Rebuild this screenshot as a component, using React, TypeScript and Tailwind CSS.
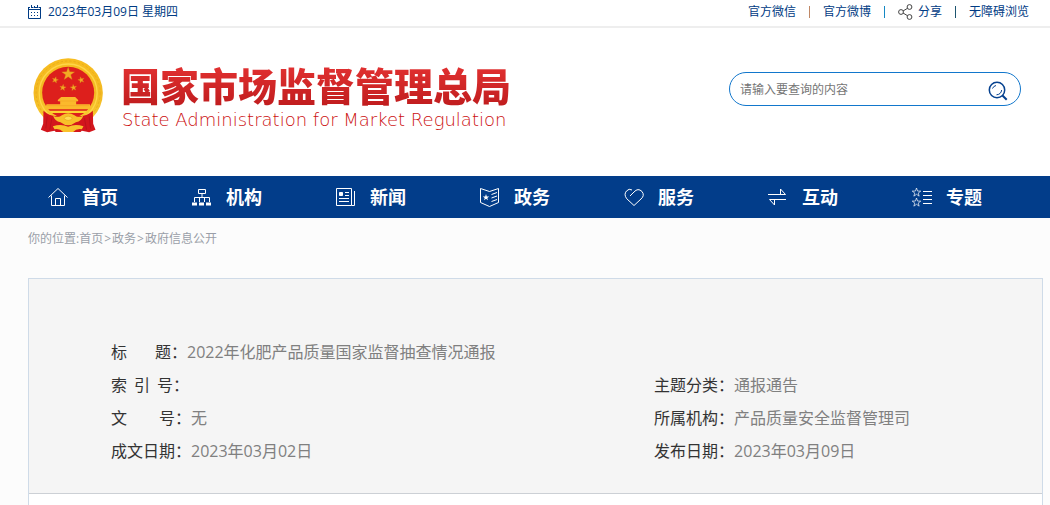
import type { ReactNode } from "react";

const starPoints = (cx: number, cy: number, r: number, turn = 0) =>
  Array.from({ length: 10 }, (_, i) => {
    const radius = i % 2 === 0 ? r : r * 0.4;
    const angle = ((i * 36 - 90 + turn) * Math.PI) / 180;
    return `${(cx + radius * Math.cos(angle)).toFixed(2)},${(cy + radius * Math.sin(angle)).toFixed(2)}`;
  }).join(" ");

function Emblem() {
  return (
    <svg viewBox="38 25 212 225" className="h-[75px] w-[71px] shrink-0" aria-hidden="true">
      <defs>
        <linearGradient id="gold" x1="0" y1="0" x2="0" y2="1">
          <stop offset="0" stopColor="#f8bd20" />
          <stop offset="0.5" stopColor="#f3b922" />
          <stop offset="1" stopColor="#fbcf35" />
        </linearGradient>
      </defs>
      <circle cx="143" cy="130" r="104" fill="url(#gold)" />
      <circle cx="143" cy="130" r="96" fill="none" stroke="#eaae1c" strokeWidth="3" strokeDasharray="7 6" />
      <circle cx="143" cy="130" r="87" fill="none" stroke="#ffd548" strokeWidth="4" />
      <circle cx="143" cy="129" r="78" fill="#dd1f1c" />
      <path
        d="M69 183 Q84 198 110 200 Q143 210 176 200 Q202 198 217 183 L218 222 L225 240 L206 248 L184 243 L180 247 H106 L102 243 L80 248 L61 240 L68 222 Z"
        fill="#d3161d"
      />
      <path
        d="M80 200 L76 236 M94 206 L88 240 M206 200 L210 236 M192 206 L198 240"
        stroke="#b01018"
        strokeWidth="2"
        fill="none"
      />
      <g fill="#f2ab24" stroke="#d98a1c" strokeWidth="1">
        <polygon points={starPoints(143, 73, 20)} />
        <polygon points={starPoints(104, 91, 10, 15)} />
        <polygon points={starPoints(182, 91, 10, -15)} />
        <polygon points={starPoints(127, 114, 10, 8)} />
        <polygon points={starPoints(159, 114, 10, -8)} />
      </g>
      <path d="M122 142 H164 L173 151 V155 H167 V164 H208 L212 179 H74 L78 164 H119 V155 H112 V151 Z" fill="#fbb92c" />
      <path d="M116 154 H170 M80 168 H206" stroke="#ee9c20" strokeWidth="1.5" />
      <path d="M84 183 H202 L193 190 H93 Z" fill="#fcd42f" />
      <path
        d="M98 198 Q114 207 124 197 Q143 184 162 197 Q172 207 188 198 Q184 214 166 218 Q143 236 120 218 Q102 214 98 198 Z"
        fill="#f8c029"
      />
      <path d="M130 206 Q143 193 156 206 Q143 219 130 206 Z" fill="#ffdb55" stroke="#e8a41d" strokeWidth="2" />
      <path d="M97 230 Q122 222 143 231 Q164 222 189 230 L184 239 Q168 236 158 247 H128 Q118 236 102 239 Z" fill="#f9c22b" />
    </svg>
  );
}

function LineIcon({ children }: { children: ReactNode }) {
  return (
    <svg
      width="20"
      height="20"
      viewBox="0 0 20 20"
      fill="none"
      stroke="#fff"
      strokeWidth="1"
      className="shrink-0"
      aria-hidden="true"
    >
      {children}
    </svg>
  );
}

const navItems: { label: string; icon: ReactNode }[] = [
  {
    label: "首页",
    icon: (
      <LineIcon>
        <path d="M0.5 10.5 L10 1.5 L19.5 10.5 M3.5 8.5 V18.5 H16.5 V8.5 M7.5 18 V11.5 H12.5 V18" />
      </LineIcon>
    ),
  },
  {
    label: "机构",
    icon: (
      <LineIcon>
        <path d="M6.5 2.5 H13.5 V6.5 H6.5 Z M10 7 V11 M2.5 15 V10.5 H17.5 V15 M7.5 15 V11 M12.5 15 V11" />
        <path d="M0 17 H5 M7 17 H12 M14 17 H19" strokeWidth="3" />
      </LineIcon>
    ),
  },
  {
    label: "新闻",
    icon: (
      <LineIcon>
        <path d="M0.5 1.5 H15.5 V18.5 H0.5 Z M15.5 18.5 H18.5 V4 M9 5.5 H13 M9 8.5 H13 M3 11.5 H13 M3 14.5 H13" />
        <path d="M3.5 5.5 H6.5 V8.5 H3.5 Z" fill="#fff" />
      </LineIcon>
    ),
  },
  {
    label: "政务",
    icon: (
      <LineIcon>
        <path d="M0.5 1.5 L9.5 4.5 L18.5 1.5 V15.5 L9.5 19.5 L0.5 15.5 Z M11.5 7.5 L17 5.5 M11.5 11 L17 9 M11.5 14.5 L17 12.5" />
        <polygon points={starPoints(6, 10.5, 3.4)} fill="#fff" stroke="none" />
      </LineIcon>
    ),
  },
  {
    label: "服务",
    icon: (
      <LineIcon>
        <path d="M6 9 L10 5 Q14 0.5 18 4.5 Q21 8.5 17 12 L10 18.5 L2.8 11.8 Q-0.5 7.5 2.5 4 Q5 1 8 3" />
      </LineIcon>
    ),
  },
  {
    label: "互动",
    icon: (
      <LineIcon>
        <path d="M0 7.5 H17.5 L12.5 2 V7 M18 12.5 H1.5 L6.5 18 V13" />
      </LineIcon>
    ),
  },
  {
    label: "专题",
    icon: (
      <LineIcon>
        <path d="M11 4.5 H20 M11 8.5 H20 M11 12.5 H20 M11 16.5 H20" />
        <polygon points={starPoints(4.5, 5.5, 4.5)} strokeWidth="0.7" />
        <polygon points={starPoints(4.5, 15.5, 4.5)} strokeWidth="0.7" />
      </LineIcon>
    ),
  },
];

interface FieldProps {
  label: string[];
  labelWidth: string;
  value?: string;
  colon?: string;
  className?: string;
}

function Field({ label, labelWidth, value, colon = "：", className = "" }: FieldProps) {
  return (
    <div className={`flex ${className}`}>
      <dt className="flex shrink-0 text-[#333]">
        <span className={`flex justify-between ${labelWidth}`}>
          {label.map((part) => (
            <span key={part}>{part}</span>
          ))}
        </span>
        {colon}
      </dt>
      <dd className="text-[#808080]">{value}</dd>
    </div>
  );
}

export default function App() {
  return (
    <div className="min-h-screen bg-[#fcfcfc] font-['Open_Sans','Noto_Sans_CJK_SC',sans-serif] text-xs text-[#003b84]">
      <div className="flex h-7 items-center justify-between border-b-2 border-[#eee] bg-white pr-[21px] pb-[2px] pl-7">
        <div className="flex items-center gap-[7px]">
          <svg width="13" height="14" viewBox="0 0 13 14" fill="none" stroke="currentColor" aria-hidden="true">
            <path d="M0.5 2 V13.5 H12.5 V2 M0 4.5 H13" />
            <path d="M0 2.5 H13" strokeDasharray="2 1.5" />
            <path d="M3.5 0 V3 M6.5 1 V3 M9.5 0 V3" />
            <path d="M3 7.5 H11 M3 10.5 H11" strokeDasharray="1 2" />
          </svg>
          <span>2023年03月09日 星期四</span>
        </div>
        <div className="flex items-center gap-[13px]">
          <a href="#wechat">官方微信</a>
          <span className="h-3 w-px bg-[#c08866]" />
          <a href="#weibo">官方微博</a>
          <span className="h-3 w-px bg-[#1488c4]" />
          <a href="#share" className="flex items-center gap-[5px]">
            <svg width="15" height="16" viewBox="0 0 15 16" fill="none" stroke="#444" aria-hidden="true">
              <circle cx="3" cy="8" r="2.4" />
              <circle cx="11.5" cy="3" r="2.4" />
              <circle cx="11.5" cy="13" r="2.4" />
              <path d="M5 7 L9.5 4.3 M5 9 L9.5 11.7" />
            </svg>
            分享
          </a>
          <span className="h-3 w-px bg-[#1d5570]" />
          <a href="#accessible">无障碍浏览</a>
        </div>
      </div>

      <header className="flex h-[148px] items-start justify-between bg-white pr-[29px] pl-[33px]">
        <a href="#home" className="flex items-start gap-[17px] pt-[30px]">
          <Emblem />
          <span className="flex flex-col">
            <span className="bg-linear-to-b from-[#e83434] to-[#bd1a1c] bg-clip-text font-['Noto_Sans_CJK_SC',sans-serif] text-[39px] leading-[52px] font-black whitespace-nowrap text-transparent">
              国家市场监督管理总局
            </span>
            <span className="pl-px font-['DejaVu_Sans',sans-serif] text-lg leading-5 font-extralight whitespace-nowrap text-[#cc1010]">
              State Administration for Market Regulation
            </span>
          </span>
        </a>
        <form className="mt-11 flex h-[34px] w-[292px] items-center rounded-full border border-[#1277cc] pr-3 pl-[10px]">
          <input
            type="text"
            aria-label="搜索"
            placeholder="请输入要查询的内容"
            className="min-w-0 flex-1 bg-transparent pt-[2px] text-xs text-[#333] outline-none placeholder:text-[#757575]"
          />
          <button type="button" aria-label="查询" className="mt-1">
            <svg width="20" height="20" viewBox="0 0 20 20" fill="none" stroke="#064290" aria-hidden="true">
              <circle cx="9" cy="9" r="7.7" strokeWidth="1.5" />
              <path d="M14.5 14.5 L18.7 18.7" strokeWidth="2" />
              <path d="M4.5 7.5 Q5.5 5 8 4.5 M8.5 13.8 Q13 13.5 13.7 9" />
            </svg>
          </button>
        </form>
      </header>

      <nav className="grid h-[42px] grid-cols-7 bg-[#023d8a] pr-[14px] pl-7 text-lg font-bold text-white">
        {navItems.map((item) => (
          <a key={item.label} href="#section" className="flex items-center gap-[14px] pl-5 whitespace-nowrap">
            {item.icon}
            {item.label}
          </a>
        ))}
      </nav>

      <div className="flex h-[42px] items-center pl-7 text-[#9a9fa8]">
        <span>你的位置:</span>
        <a href="#home">首页</a>
        <span className="px-px">&gt;</span>
        <a href="#affairs">政务</a>
        <span className="px-px">&gt;</span>
        <a href="#open">政府信息公开</a>
      </div>

      <main className="mt-[18px] mr-[7px] ml-7 border border-b-0 border-[#cfdbe8] bg-white">
        <dl className="grid grid-cols-[7fr_5fr] border-b border-[#ccd0d5] bg-[#f5f5f5] pt-[57px] pb-[25px] pl-[82px] text-base leading-[33px]">
          <Field className="col-span-2" label={["标", "题"]} labelWidth="w-[60px]" value="2022年化肥产品质量国家监督抽查情况通报" />
          <Field label={["索", "引", "号"]} labelWidth="w-[62px]" colon="：" />
          <Field label={["主题分类"]} labelWidth="w-16" value="通报通告" />
          <Field label={["文", "号"]} labelWidth="w-16" value="无" />
          <Field label={["所属机构"]} labelWidth="w-16" value="产品质量安全监督管理司" />
          <Field label={["成文日期"]} labelWidth="w-16" value="2023年03月02日" />
          <Field label={["发布日期"]} labelWidth="w-16" value="2023年03月09日" />
        </dl>
        <div className="h-3" />
      </main>
    </div>
  );
}
